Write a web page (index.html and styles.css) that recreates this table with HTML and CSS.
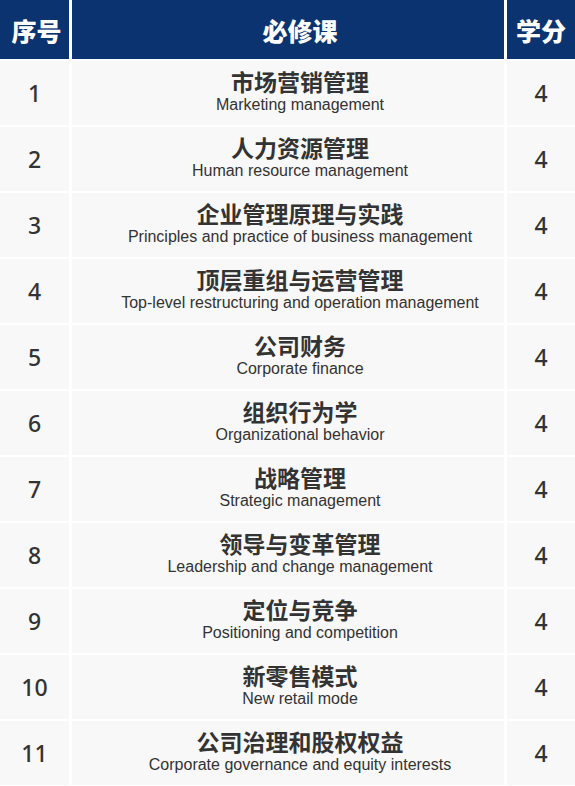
FILE: index.html
```html
<!DOCTYPE html>
<html lang="zh">
<head>
<meta charset="utf-8">
<link rel="stylesheet" href="styles.css">
</head>
<body>
<div class="table">
  <div class="head head-first">序号</div>
  <div class="head head-mid">必修课</div>
  <div class="head">学分</div>

  <div class="cell num">1</div>
  <div class="cell course"><div class="zh">市场营销管理</div><div class="en">Marketing management</div></div>
  <div class="cell num">4</div>

  <div class="cell num">2</div>
  <div class="cell course"><div class="zh">人力资源管理</div><div class="en">Human resource management</div></div>
  <div class="cell num">4</div>

  <div class="cell num">3</div>
  <div class="cell course"><div class="zh">企业管理原理与实践</div><div class="en">Principles and practice of business management</div></div>
  <div class="cell num">4</div>

  <div class="cell num">4</div>
  <div class="cell course"><div class="zh">顶层重组与运营管理</div><div class="en">Top-level restructuring and operation management</div></div>
  <div class="cell num">4</div>

  <div class="cell num">5</div>
  <div class="cell course"><div class="zh">公司财务</div><div class="en">Corporate finance</div></div>
  <div class="cell num">4</div>

  <div class="cell num">6</div>
  <div class="cell course"><div class="zh">组织行为学</div><div class="en">Organizational behavior</div></div>
  <div class="cell num">4</div>

  <div class="cell num">7</div>
  <div class="cell course"><div class="zh">战略管理</div><div class="en">Strategic management</div></div>
  <div class="cell num">4</div>

  <div class="cell num">8</div>
  <div class="cell course"><div class="zh">领导与变革管理</div><div class="en">Leadership and change management</div></div>
  <div class="cell num">4</div>

  <div class="cell num">9</div>
  <div class="cell course"><div class="zh">定位与竞争</div><div class="en">Positioning and competition</div></div>
  <div class="cell num">4</div>

  <div class="cell num">10</div>
  <div class="cell course"><div class="zh">新零售模式</div><div class="en">New retail mode</div></div>
  <div class="cell num">4</div>

  <div class="cell num">11</div>
  <div class="cell course"><div class="zh">公司治理和股权权益</div><div class="en">Corporate governance and equity interests</div></div>
  <div class="cell num">4</div>
</div>
</body>
</html>
```
FILE: styles.css
```css
html, body {
  margin: 0;
  padding: 0;
  background: #ffffff;
}
.table {
  display: grid;
  grid-template-columns: 69px 1fr 68px;
  grid-auto-rows: 64px;
  grid-template-rows: 59px;
  column-gap: 3px;
  row-gap: 2px;
  width: 575px;
}
.head {
  background: #0b3370;
  color: #ffffff;
  font-family: "Noto Sans CJK SC", sans-serif;
  font-weight: 900;
  font-size: 25px;
  display: flex;
  align-items: center;
  justify-content: center;
}
.head-first {
  padding-left: 4px;
}
.head-mid {
  padding-left: 24px;
}
.cell {
  background: #f8f8f8;
  color: #333333;
  display: flex;
  flex-direction: column;
  align-items: center;
  justify-content: center;
}
.course {
  padding-left: 24px;
  padding-bottom: 4px;
}
.num {
  font-family: "Noto Sans", sans-serif;
  font-weight: 500;
  font-size: 23px;
}
.zh {
  font-family: "Noto Sans CJK SC", sans-serif;
  font-weight: 700;
  font-size: 23px;
  line-height: 27px;
}
.en {
  font-family: "Liberation Sans", Arial, sans-serif;
  font-size: 16px;
  line-height: 20px;
}
```
